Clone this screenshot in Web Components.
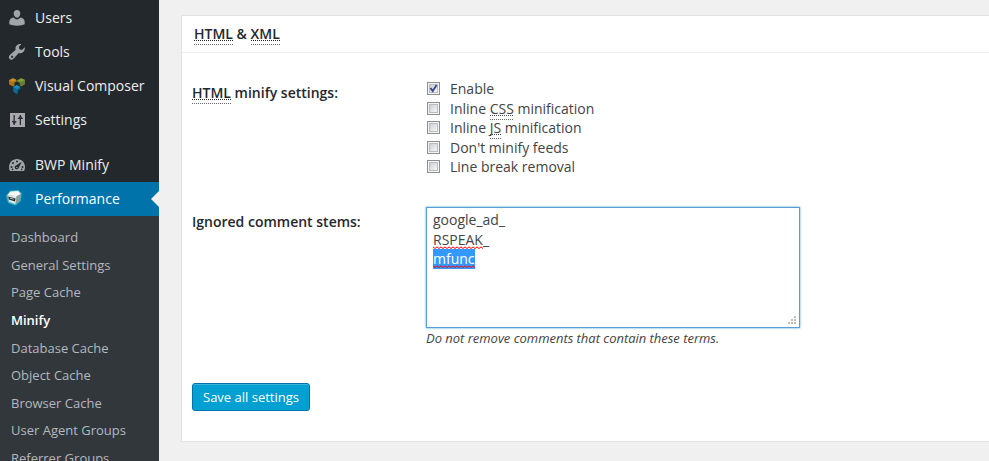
<!DOCTYPE html>
<html lang="en"><head><meta charset="utf-8"><title>Minify settings</title>
<style>
html,body{margin:0;height:461px;overflow:hidden;background:#f0f0f0}
body{font:14px/20px "Open Sans",sans-serif;color:#444}
</style></head><body>
<admin-page></admin-page>
<script>
const define=(name,html,setup)=>customElements.define(name,class extends HTMLElement{
  constructor(){super();const t=document.createElement('template');t.innerHTML=html;
    this.attachShadow({mode:'open'}).append(t.content.cloneNode(true));}
  connectedCallback(){if(setup)setup.call(this,this.shadowRoot);}
});

const icons={
users:'<path fill="#a0a5aa" d="M8 0c2.200 0 3.300 1.500 3.300 3.500S10 7.700 8 7.700 4.700 5.500 4.700 3.500 5.800 0 8 0zM4.600 7.500C5.500 8.600 6.600 9.400 8 9.400s2.500-.8 3.400-1.900c2.800.5 4.300 2 4.300 4.500v2.300c-2 .9-4.500 1.400-7.700 1.400S2.300 15.200.3 14.300V12c0-2.500 1.500-4 4.300-4.500z"/>',
tools:'<path fill="#a0a5aa" d="M15.700 3.300 13 6 10.400 5.300 9.800 2.800 12.400.2C10.600-.3 8.600.2 7.400 1.700 6.400 2.900 6.200 4.400 6.700 5.800L.8 11.100c-1.200 1.100-1.200 2.700-.2 3.800 1.100 1.100 2.800 1 3.900-.2L9.800 9c1.500.5 3.100.2 4.400-1C15.600 6.700 16.100 4.800 15.700 3.300zM3.900 13.500a1.100 1.100 0 1 1-1.500-1.600 1.100 1.100 0 0 1 1.500 1.600z"/>',
composer:'<path fill="#a87418" d="m0 2.300 4-2 3.600 1.700v1.800L5.500 4.600v3.200L3.900 8.600 0 6.300z"/><path fill="#c98e24" d="m0 2.300 4-2 3.600 1.700-3.500 2z"/><path fill="#66802f" d="m8.200 2.400 4-2.100L16 2v4.200l-3.700 2.200-1.500-.8V5L8.200 3.800z"/><path fill="#869f3c" d="m8.200 2.400 4-2.100L16 2l-3.700 2z"/><path fill="#0b6a96" d="m4.200 9 3.700-1.900L11.300 9v2L8.800 12.200v3.200L7.800 16l-3.600-2.300z"/><path fill="#1d8dbb" d="m4.200 9 3.700-1.900L11.300 9 8 11z"/>',
settings:'<path fill="#a7a9ae" d="M1 1h15v14H1z"/><g fill="#302b38"><path d="M4.500 3h1.300v10H4.500zM3 9h4.400v1.300H3zM4 10.300h2.400v1.200H4zM10.700 3H12v10h-1.300zM8.800 5.700h5V7h-5zM10 4.500h2.700v1.200H10z"/></g>',
gauge:'<path fill="#a0a5aa" d="M8 2C3.500 2 0 5.600 0 10c0 1.700.4 3 1 4h14c.6-1 1-2.300 1-4 0-4.400-3.500-8-8-8z"/><g fill="#23282d"><circle cx="8" cy="4.400" r="1"/><circle cx="4" cy="6" r="1"/><circle cx="2.500" cy="10" r="1"/><circle cx="3.500" cy="12.400" r=".8"/><circle cx="13.500" cy="10" r="1"/><circle cx="12.700" cy="12.400" r=".8"/><path d="m12.800 4.700-3.200 6.200A2 2 0 1 1 7 8.400z"/></g><circle cx="7.800" cy="10.400" r=".7" fill="#a0a5aa"/>',
cube:'<g transform="translate(-3 -1)"><path fill="#31b6c5" d="M4 .7 12.300 0l3.500 3.200-1 7.700-5.200 4.500L2.100 13 0 6z"/><path fill="#f7f7f5" d="m4.500 1.500 7.600-.4L15 3.900l-4.300 2.300L1.500 5z"/><path fill="#e4e6e4" d="m1.500 5 9.200 1.200-1.200 8L3 11.800z"/><path fill="#969b99" d="M10.700 6.200 15 3.900l-1.200 6.700-4.300 3.700z"/><path fill="#263137" d="m2.200 6.500 7.300 1.900-.5 3-6.200-2z"/><path stroke="#dbe1df" stroke-width=".8" d="m4 8.200 3.600 1"/></g>'
};
define('menu-item',`<style>
:host{display:flex;height:34px;align-items:center;color:#eee;position:relative}
svg{width:16px;height:16px;margin:0 10px 0 9px;overflow:visible;flex:none}
:host([current]){background:#0073aa;color:#fff}
:host([current])::after{content:"";position:absolute;right:0;top:9px;border:8px solid transparent;border-left:0;border-right-color:#f0f0f0}
</style><svg viewBox="0 0 16 16"></svg><slot></slot>`,function(r){r.querySelector('svg').innerHTML=icons[this.getAttribute('icon')];});
define('sub-item',`<style>:host{display:block;padding:4.800px 11px;font-size:13px;line-height:18px;color:#b4b9be;white-space:nowrap}
:host([current]){font-weight:600;color:#fff}</style><slot></slot>`);
define('admin-menu',`<style>
:host{display:block;width:159px;height:461px;overflow:hidden;background:#23282d;flex:none}
nav{padding-top:1px}.gap{height:11px}.sub{background:#32373c;padding-top:7.350px;height:260px}
</style><nav><menu-item icon="users">Users</menu-item><menu-item icon="tools">Tools</menu-item><menu-item icon="composer">Visual Composer</menu-item><menu-item icon="settings">Settings</menu-item>
<div class="gap"></div><menu-item icon="gauge">BWP Minify</menu-item><menu-item icon="cube" current>Performance</menu-item>
<div class="sub"><sub-item>Dashboard</sub-item><sub-item>General Settings</sub-item><sub-item>Page Cache</sub-item><sub-item current>Minify</sub-item><sub-item>Database Cache</sub-item><sub-item>Object Cache</sub-item><sub-item>Browser Cache</sub-item><sub-item>User Agent Groups</sub-item><sub-item>Referrer Groups</sub-item></div></nav>`);
define('abbr-term',`<style>:host{display:inline-block;height:21px;margin-bottom:-1px;line-height:20px;vertical-align:top;background:repeating-linear-gradient(90deg,currentColor 0 1px,transparent 1px 2px) 0 16px/100% 1px no-repeat,repeating-linear-gradient(90deg,#666 0 1px,transparent 1px 2px) 0 100%/100% 1px no-repeat}</style><slot></slot>`);
define('check-option',`<style>
:host{display:flex;align-items:center;height:19.500px;white-space:nowrap}
i{box-sizing:border-box;width:13px;height:13px;border:1px solid #8e8f8f;background:linear-gradient(135deg,#cbcfd5,#f6f6f6) 2px 2px/7px 7px no-repeat,#f4f4f4;box-shadow:inset 0 0 0 1px #f4f4f4,inset 0 0 0 2px #b9bcc0;margin:-.6px 10px 0 0;flex:none;display:block}
svg{display:none;width:11px;height:11px}:host([checked]) svg{display:block}
span{display:block;line-height:20px}
</style><i><svg viewBox="0 0 11 11"><path d="M2.500 5 4.700 8 8.600 2" fill="none" stroke="#3b4a90" stroke-width="1.900"/></svg></i><span><slot></slot></span>`);
const wave="url(\"data:image/svg+xml,%3Csvg xmlns='http://www.w3.org/2000/svg' width='4' height='3'%3E%3Cpath d='M-.5 .5 2 2.500 4.500 .5' fill='none' stroke='red'/%3E%3C/svg%3E\")";
define('spell-word',`<style>:host{display:inline-block;height:19px;line-height:20px;vertical-align:top;background:${wave} 0 100%/4px 3px repeat-x}
:host([selected]){background-color:#39f;background-position:0 16px;color:#fff;height:20px;margin-top:-1px}</style><slot></slot>`);
define('text-box',`<style>:host{display:block;box-sizing:border-box;position:relative;width:374px;height:121px;border:1px solid #5b9dd9;box-shadow:0 0 2px rgba(30,140,190,.8);background:#fff;padding:2px 6px;color:#444}
svg{position:absolute;right:2px;bottom:2px;width:9px;height:9px}</style><slot></slot><svg viewBox="0 0 9 9" fill="#c4bdb6"><path d="M6 0h2v2H6zM3 3h2v2H3zM6 3h2v2H6zM0 6h2v2H0zM3 6h2v2H3zM6 6h2v2H6z"/></svg>`);
define('primary-button',`<style>:host{display:inline-block;box-sizing:border-box;width:118px;height:28px;border:1px solid #0073aa;border-radius:3px;background:#00a0d2;box-shadow:inset 0 1px 0 rgba(120,200,230,.5);color:#fff;font-size:13px;line-height:26px;text-align:center}</style><slot></slot>`);
define('settings-panel',`<style>
:host{display:block;box-sizing:border-box;height:427px;margin:15px 0 0 22px;border:1px solid #e2e2e2;border-right:0;background:#fff;flex:1}
header{height:36px;box-sizing:content-box;border-bottom:1px solid #eee;padding-left:12px;font-weight:600;color:#23282d;line-height:20px}
header div{padding-top:8px}
.body{padding:26px 0 0 10px}
.row{display:grid;grid-template-columns:234px 1fr}
.row>b{font-weight:600;color:#23282d;padding-top:4px}
.opts{padding:.4px 0 0 1px}
.second{margin-top:30.100px}
.second>b{padding-top:5px}
.note{font-size:13px;line-height:20px;font-style:italic;letter-spacing:-.02px}
.lines{height:20px;line-height:20px}
primary-button{margin-top:35px}
</style><header><div><abbr-term>HTML</abbr-term> &amp; <abbr-term>XML</abbr-term></div></header>
<div class="body"><div class="row"><b><abbr-term>HTML</abbr-term> minify settings:</b><div class="opts"><check-option checked>Enable</check-option><check-option>Inline <abbr-term>CSS</abbr-term> minification</check-option><check-option>Inline <abbr-term>JS</abbr-term> minification</check-option><check-option>Don't minify feeds</check-option><check-option>Line break removal</check-option></div></div>
<div class="row second"><b>Ignored comment stems:</b><div><text-box><div class="lines">google_ad_</div><div class="lines"><spell-word>RSPEAK</spell-word>_</div><div class="lines"><spell-word selected>mfunc</spell-word></div></text-box><div class="note">Do not remove comments that contain these terms.</div></div></div>
<primary-button>Save all settings</primary-button></div>`);
define('admin-page',`<style>:host{display:flex;align-items:flex-start}</style><admin-menu></admin-menu><settings-panel></settings-panel>`);
</script></body></html>
